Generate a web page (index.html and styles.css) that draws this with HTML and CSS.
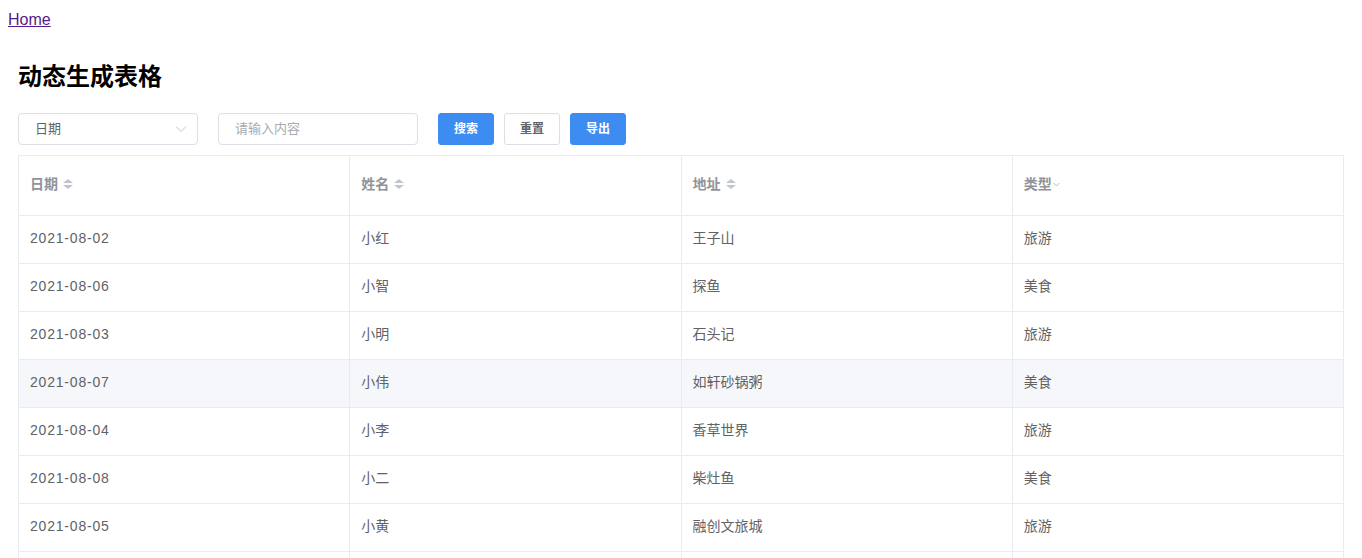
FILE: index.html
```html
<!DOCTYPE html>
<html lang="zh-CN">
<head>
<meta charset="utf-8">
<title>动态生成表格</title>
<link rel="stylesheet" href="styles.css">
</head>
<body>
<div class="nav"><a href="#">Home</a></div>
<div class="page">
  <h2 class="title">动态生成表格</h2>
  <div class="toolbar">
    <div class="select">
      <span class="select-text">日期</span>
      <svg class="chev" width="12" height="8" viewBox="0 0 12 8"><path d="M1 1.5 L6 6.5 L11 1.5" fill="none" stroke="#c0c4cc" stroke-width="1"/></svg>
    </div>
    <div class="input"><span class="placeholder">请输入内容</span></div>
    <div class="btns">
      <button class="btn primary">搜索</button>
      <button class="btn">重置</button>
      <button class="btn primary">导出</button>
    </div>
  </div>
  <table class="grid">
    <thead>
      <tr>
        <th><span class="th-in">日期<span class="caret"><i class="up"></i><i class="down"></i></span></span></th>
        <th><span class="th-in">姓名<span class="caret"><i class="up"></i><i class="down"></i></span></span></th>
        <th><span class="th-in">地址<span class="caret"><i class="up"></i><i class="down"></i></span></span></th>
        <th><span class="th-in">类型<svg class="filter" width="7" height="5" viewBox="0 0 7 5"><path d="M0.5 1 L3.5 4 L6.5 1" fill="none" stroke="#b0b3b8" stroke-width="0.9"/></svg></span></th>
      </tr>
    </thead>
    <tbody>
      <tr><td class="date">2021-08-02</td><td>小红</td><td>王子山</td><td>旅游</td></tr>
      <tr><td class="date">2021-08-06</td><td>小智</td><td>探鱼</td><td>美食</td></tr>
      <tr><td class="date">2021-08-03</td><td>小明</td><td>石头记</td><td>旅游</td></tr>
      <tr class="hover"><td class="date">2021-08-07</td><td>小伟</td><td>如轩砂锅粥</td><td>美食</td></tr>
      <tr><td class="date">2021-08-04</td><td>小李</td><td>香草世界</td><td>旅游</td></tr>
      <tr><td class="date">2021-08-08</td><td>小二</td><td>柴灶鱼</td><td>美食</td></tr>
      <tr><td class="date">2021-08-05</td><td>小黄</td><td>融创文旅城</td><td>旅游</td></tr>
      <tr><td class="date">2021-08-01</td><td>小张</td><td>长隆</td><td>旅游</td></tr>
    </tbody>
  </table>
</div>
</body>
</html>
```

FILE: styles.css
```css
body {
  margin: 8px;
  font-family: "Liberation Sans", "Noto Sans CJK SC", sans-serif;
  color: #000;
  background: #fff;
}

.nav {
  font-size: 16px;
  line-height: 24px;
}

.nav a {
  color: #551a8b;
  text-decoration: underline;
}

.page {
  padding: 10px;
}

.title {
  margin: 22px 0 23px;
  font-size: 24px;
  line-height: 26px;
  font-weight: 700;
  color: #000;
}

.toolbar {
  display: flex;
  align-items: center;
  gap: 20px;
  height: 32px;
}

.select,
.input {
  box-sizing: border-box;
  height: 32px;
  border: 1px solid #dcdfe6;
  border-radius: 4px;
  display: flex;
  align-items: center;
  padding: 0 15px 3px 16px;
  font-size: 13px;
}

.select {
  width: 180px;
  justify-content: space-between;
  padding-right: 10px;
}

.select-text {
  color: #606266;
}

.chev {
  display: block;
  margin-top: 3px;
}

.input {
  width: 200px;
}

.placeholder {
  color: #a8abb2;
}

.btns {
  display: flex;
  gap: 10px;
}

.btn {
  box-sizing: border-box;
  width: 56px;
  height: 32px;
  border: 1px solid #dcdfe6;
  border-radius: 3px;
  background: #fff;
  color: #606266;
  font-family: "Liberation Sans", "Noto Sans CJK SC", sans-serif;
  font-size: 12px;
  font-weight: 700;
  padding: 0 0 3px;
  cursor: pointer;
}

.btn.primary {
  background: #3c8cf2;
  border-color: #3c8cf2;
  color: #fff;
}

.grid {
  margin-top: 10px;
  width: 100%;
  table-layout: fixed;
  border-collapse: collapse;
  font-size: 14px;
  color: #606266;
}

.grid th,
.grid td {
  border: 1px solid #e8ebf2;
  text-align: left;
  padding: 0 11px 5px;
}

.grid th {
  height: 53px;
  padding-bottom: 6px;
  color: #909399;
  font-weight: 700;
}

.grid td {
  height: 42px;
}

.grid td.date {
  letter-spacing: 0.8px;
  height: 43px;
  padding-bottom: 4px;
}

.grid tr.hover td {
  background: #f5f7fa;
}

.th-in {
  display: inline-flex;
  align-items: center;
}

.caret {
  display: inline-flex;
  flex-direction: column;
  gap: 2px;
  margin-left: 5px;
  margin-top: 3px;
}

.caret i {
  display: block;
  width: 0;
  height: 0;
  border-left: 5px solid transparent;
  border-right: 5px solid transparent;
}

.caret .up {
  border-bottom: 4px solid #c0c4cc;
}

.caret .down {
  border-top: 4px solid #c0c4cc;
}

.filter {
  display: block;
  margin-left: 1px;
  margin-top: 4px;
}
```
